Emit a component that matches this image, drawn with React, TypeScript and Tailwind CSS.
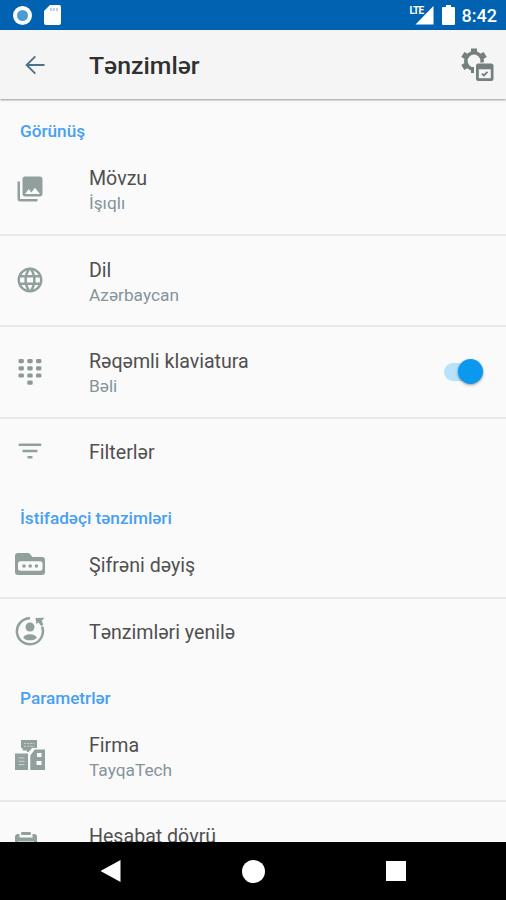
import type { ReactNode } from "react";
import { MdFilterList, MdLanguage, MdPhotoLibrary } from "react-icons/md";

function SettingsCalendarIcon() {
  return (
    <svg width="34" height="36" viewBox="0 0 34 36" fill="none">
      <circle cx="14" cy="14" r="8.2" stroke="#74807e" strokeWidth="3.600" />
      <g stroke="#74807e" strokeWidth="6">
        <path d="M14 1.500v5M2.800 7.500l4.500 2.600M25.200 7.500l-4.500 2.600M2.800 20.500l4.500-2.600" />
      </g>
      <path d="M14 15.500h20v20.500h-20z" fill="#f5f5f5" />
      <path d="M11 20h3v6h-3z" fill="#74807e" />
      <rect x="16" y="16.500" width="17.500" height="17.500" rx="2.500" fill="#74807e" />
      <path d="M18.800 22.300h12v8.900h-12z" fill="#f5f5f5" />
      <path d="M22 26.700l1.900 1.800 3.600-3.700" stroke="#74807e" strokeWidth="1.900" />
    </svg>
  );
}

function KeypadIcon() {
  return (
    <svg width="24" height="26" viewBox="0 0 24 26" fill="#8b9a97">
      {[0, 7.2, 14.4].map((y) =>
        [0.500, 9.300, 18].map((x) => (
          <rect key={`${x}-${y}`} x={x} y={y} width="5.400" height="4.200" rx="1.400" />
        )),
      )}
      <rect x="9.300" y="21.600" width="5.400" height="4.200" rx="1.400" />
    </svg>
  );
}

function PasswordFolderIcon() {
  return (
    <svg width="30" height="24" viewBox="0 0 30 24">
      <path
        d="M3 1h11l3.500 4H27a3 3 0 0 1 3 3v12a3 3 0 0 1-3 3H3a3 3 0 0 1-3-3V4a3 3 0 0 1 3-3z"
        fill="#91a09d"
      />
      <rect x="3" y="9.300" width="24.500" height="9.500" rx="2.500" fill="#fafafa" />
      <g fill="#91a09d">
        <circle cx="9" cy="14" r="1.800" />
        <circle cx="15.200" cy="14" r="1.800" />
        <circle cx="21.400" cy="14" r="1.800" />
      </g>
    </svg>
  );
}

function RefreshUserIcon() {
  return (
    <svg width="30" height="30" viewBox="0 0 30 30" fill="#91a09d">
      <path
        d="M15 2.300A13 13 0 1 0 27 10.500"
        fill="none"
        stroke="#91a09d"
        strokeWidth="2.500"
      />
      <path d="M20.500 2l9-.3-2.700 3 1.500 4-2.300 1.400-2.500-3.800-2 2z" />
      <circle cx="15" cy="11" r="4.500" />
      <ellipse cx="15" cy="21.300" rx="6.500" ry="3" />
    </svg>
  );
}

function BuildingsIcon() {
  return (
    <svg width="30" height="30" viewBox="0 0 30 30" fill="#91a09d">
      <path d="M6 0h16v8h-3.500l-4 4H12v-1.500H7.500V8H6z" />
      <path d="M0 13.500h13V30H0zM15.300 30V15.500l4.500-6H30V30z" />
      <path d="M14 12.500l4-4.500" stroke="#fafafa" strokeWidth="1.200" />
      <g stroke="#cbd4d1" strokeWidth="1" fill="none">
        <path d="M9 3.500h10.500M9 6.300h10.500" strokeDasharray="2 1.200" />
        <path d="M3.500 18h6M3.500 21.300h6M3.500 24.600h6" />
      </g>
      <path d="M22 13h4.500v4H22zM21.500 21h5v4h-5z" fill="#fafafa" />
    </svg>
  );
}

function ReportIcon() {
  return (
    <svg width="22" height="28" viewBox="0 0 22 28" fill="#91a09d">
      <rect x="6" y="0" width="10" height="3" rx="1.300" />
      <path d="M3 2h1.500v3.500h13V2H19a3 3 0 0 1 3 3v20a3 3 0 0 1-3 3H3a3 3 0 0 1-3-3V5a3 3 0 0 1 3-3z" />
      <path d="M3 9.500h16v15.500H3z" fill="#fafafa" />
    </svg>
  );
}

function SectionTitle({ children }: { children: ReactNode }) {
  return (
    <h2 className="h-11 shrink-0 pt-[21px] pl-5 text-[17.2px] leading-5 font-medium text-[#47a0f3]">
      {children}
    </h2>
  );
}

type RowProps = {
  icon: ReactNode;
  title: string;
  value?: string;
  divider?: boolean;
  action?: ReactNode;
};

function SettingsRow({ icon, title, value, divider, action }: RowProps) {
  return (
    <div
      className={`flex shrink-0 items-center ${value ? "h-[91.5px]" : "h-[68px]"} ${
        divider ? "border-b-2 border-[#e8e8e8]" : "pb-1"
      }`}
    >
      <span className="flex w-[60px] shrink-0 justify-center text-[#91a09d]">
        {icon}
      </span>
      <div className={`ml-[29px] flex-1 ${value ? "pt-[5px]" : "pt-[3px]"}`}>
        <p className="text-[19.6px] leading-[25px] text-[#505050]">{title}</p>
        {value ? (
          <p className="text-[17.3px] leading-[25px] text-[#84949c]">{value}</p>
        ) : null}
      </div>
      {action}
    </div>
  );
}

function Toggle() {
  return (
    <button
      role="switch"
      aria-checked="true"
      aria-label="Rəqəmli klaviatura"
      className="mr-[23px] flex h-[18px] w-[39px] items-center justify-end rounded-full bg-[#b6e2fb]"
    >
      <span className="size-[25px] shrink-0 rounded-full bg-[#0b98ef] shadow-[0_1px_3px_rgba(0,0,0,0.4)]" />
    </button>
  );
}

function StatusBar() {
  return (
    <div className="flex h-[30px] shrink-0 items-center bg-[#0062b1] text-white">
      <span className="ml-[13px] size-[19px] rounded-full border-4 border-white bg-[#4a9dd3]" />
      <svg className="ml-3" width="17" height="20" viewBox="0 0 17 20">
        <path d="M6 0h9a2 2 0 0 1 2 2v16a2 2 0 0 1-2 2H2a2 2 0 0 1-2-2V6z" fill="#fff" />
        <path d="M7 3v3M10 3v3M13 3v3" stroke="#8ab4df" strokeWidth="1.200" />
      </svg>
      <div className="ml-auto flex items-center">
        <span className="relative h-5 w-6">
          <svg width="24" height="20" viewBox="0 0 24 20">
            <path d="M23.500 1v18.500H5.500z" fill="#fff" />
          </svg>
          <span className="absolute top-px left-0 bg-[#0062b1] pr-px text-[10px] leading-[9px] font-bold tracking-[-0.8px]">
            LTE
          </span>
        </span>
        <svg className="ml-2" width="13" height="20" viewBox="0 0 13 20">
          <path d="M4 0h5v2h3a1 1 0 0 1 1 1v16a1 1 0 0 1-1 1H1a1 1 0 0 1-1-1V3a1 1 0 0 1 1-1h3z" fill="#fff" />
        </svg>
        <span className="mr-[9px] ml-[7px] pt-px text-[18px] leading-5 font-medium">8:42</span>
      </div>
    </div>
  );
}

export default function App() {
  return (
    <div className="flex h-[900px] w-[506px] flex-col overflow-hidden bg-[#fafafa] font-[Roboto,sans-serif]">
      <StatusBar />
      <header className="z-10 flex h-[69px] shrink-0 items-center bg-[#f5f5f5] shadow-[0_1px_2px_rgba(0,0,0,0.4)]">
        <button aria-label="Geri" className="ml-[25px]">
          <svg width="20" height="20" viewBox="0 0 20 20" fill="none">
            <path d="M19.500 10H2M10.300 1.300L1.600 10l8.700 8.700" stroke="#4c7388" strokeWidth="1.900" />
          </svg>
        </button>
        <h1 className="ml-11 pt-0.5 text-[24.800px] leading-8 font-medium text-[#303030]">
          Tənzimlər
        </h1>
        <button aria-label="Tarix tənzimləri" className="mr-3 ml-auto">
          <SettingsCalendarIcon />
        </button>
      </header>

      <main className="flex min-h-0 flex-1 flex-col overflow-hidden pt-px">
        <SectionTitle>Görünüş</SectionTitle>
        <SettingsRow icon={<MdPhotoLibrary size={30} />} title="Mövzu" value="İşıqlı" divider />
        <SettingsRow icon={<MdLanguage size={30} />} title="Dil" value="Azərbaycan" divider />
        <SettingsRow
          icon={<KeypadIcon />}
          title="Rəqəmli klaviatura"
          value="Bəli"
          divider
          action={<Toggle />}
        />
        <SettingsRow icon={<MdFilterList size={30} />} title="Filterlər" />

        <SectionTitle>İstifadəçi tənzimləri</SectionTitle>
        <SettingsRow icon={<PasswordFolderIcon />} title="Şifrəni dəyiş" divider />
        <SettingsRow icon={<RefreshUserIcon />} title="Tənzimləri yenilə" />

        <SectionTitle>Parametrlər</SectionTitle>
        <SettingsRow icon={<BuildingsIcon />} title="Firma" value="TayqaTech" divider />
        <div className="flex shrink-0 pt-[22px]">
          <span className="mt-2 ml-[15px]">
            <ReportIcon />
          </span>
          <p className="ml-[52px] text-[19.6px] leading-[25px] text-[#505050]">Hesabat dövrü</p>
        </div>
      </main>

      <nav className="flex h-[58px] shrink-0 items-center bg-black">
        <button aria-label="Geri" className="ml-[100px]">
          <svg width="21" height="22" viewBox="0 0 21 22" fill="#fff">
            <path d="M20.500 0v22L.5 11z" />
          </svg>
        </button>
        <button aria-label="Əsas" className="ml-[121px] size-[23px] rounded-full bg-white" />
        <button aria-label="Son" className="ml-[121px] size-5 bg-white" />
      </nav>
    </div>
  );
}
